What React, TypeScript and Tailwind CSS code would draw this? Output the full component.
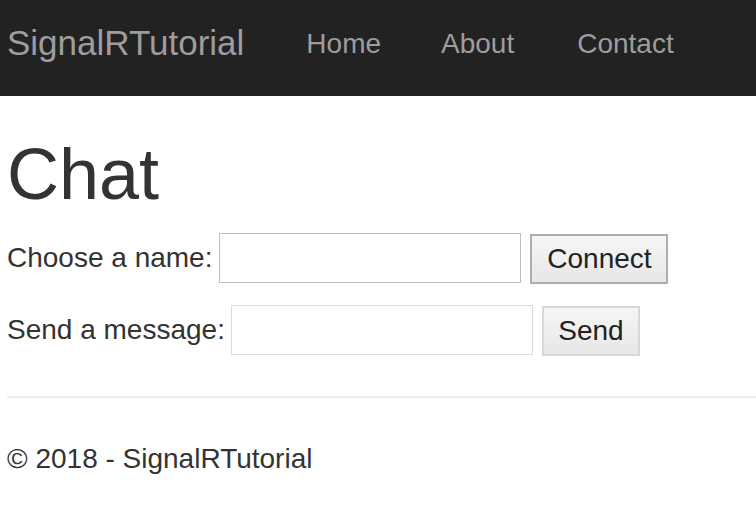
import React from "react";

export default function App() {
  const font = { fontFamily: '"Liberation Sans", Arial, Helvetica, sans-serif' };
  return (
    <div style={font} className="w-[756px] h-[518px] bg-white text-[#333] overflow-hidden">
      <nav className="h-[96px] bg-[#222] flex items-start pt-[23px] pl-[7px]">
        <span className="text-[35px] leading-[40px] text-[#9d9d9d]">SignalRTutorial</span>
        <ul className="flex items-start ml-[32px] mt-[1px] text-[28px] leading-[40px] text-[#9d9d9d]">
          <li className="px-[30px]">Home</li>
          <li className="px-[30px]">About</li>
          <li className="pl-[33px] pr-[30px]">Contact</li>
        </ul>
      </nav>
      <main className="pl-[7px]">
        <h1 className="text-[72px] leading-none font-normal mt-[42px]">Chat</h1>
        <div className="flex items-start mt-[23px] h-[50px]">
          <label className="text-[28px] leading-[50px]">Choose a name:</label>
          <input className="ml-[7px] w-[302px] h-[50px] border border-[#bebebe] bg-white outline-none" />
          <button className="ml-[9px] mt-[1px] w-[138px] h-[50px] border-2 border-[#adadad] bg-gradient-to-b from-[#f6f6f6] to-[#e7e7e7] text-[28px] leading-none text-[#222]">
            Connect
          </button>
        </div>
        <div className="flex items-start mt-[22px] h-[50px]">
          <label className="text-[28px] leading-[50px]">Send a message:</label>
          <input className="ml-[6px] w-[302px] h-[50px] border border-[#dcdcdc] bg-white outline-none" />
          <button className="ml-[9px] mt-[1px] w-[98px] h-[50px] border-2 border-[#d8d8d8] bg-gradient-to-b from-[#f6f6f6] to-[#e7e7e7] text-[28px] leading-none text-[#222]">
            Send
          </button>
        </div>
        <hr className="mt-[41px] border-0 border-t-2 border-[#eee]" />
        <footer className="mt-[41px] text-[28px] leading-[40px]">© 2018 - SignalRTutorial</footer>
      </main>
    </div>
  );
}
